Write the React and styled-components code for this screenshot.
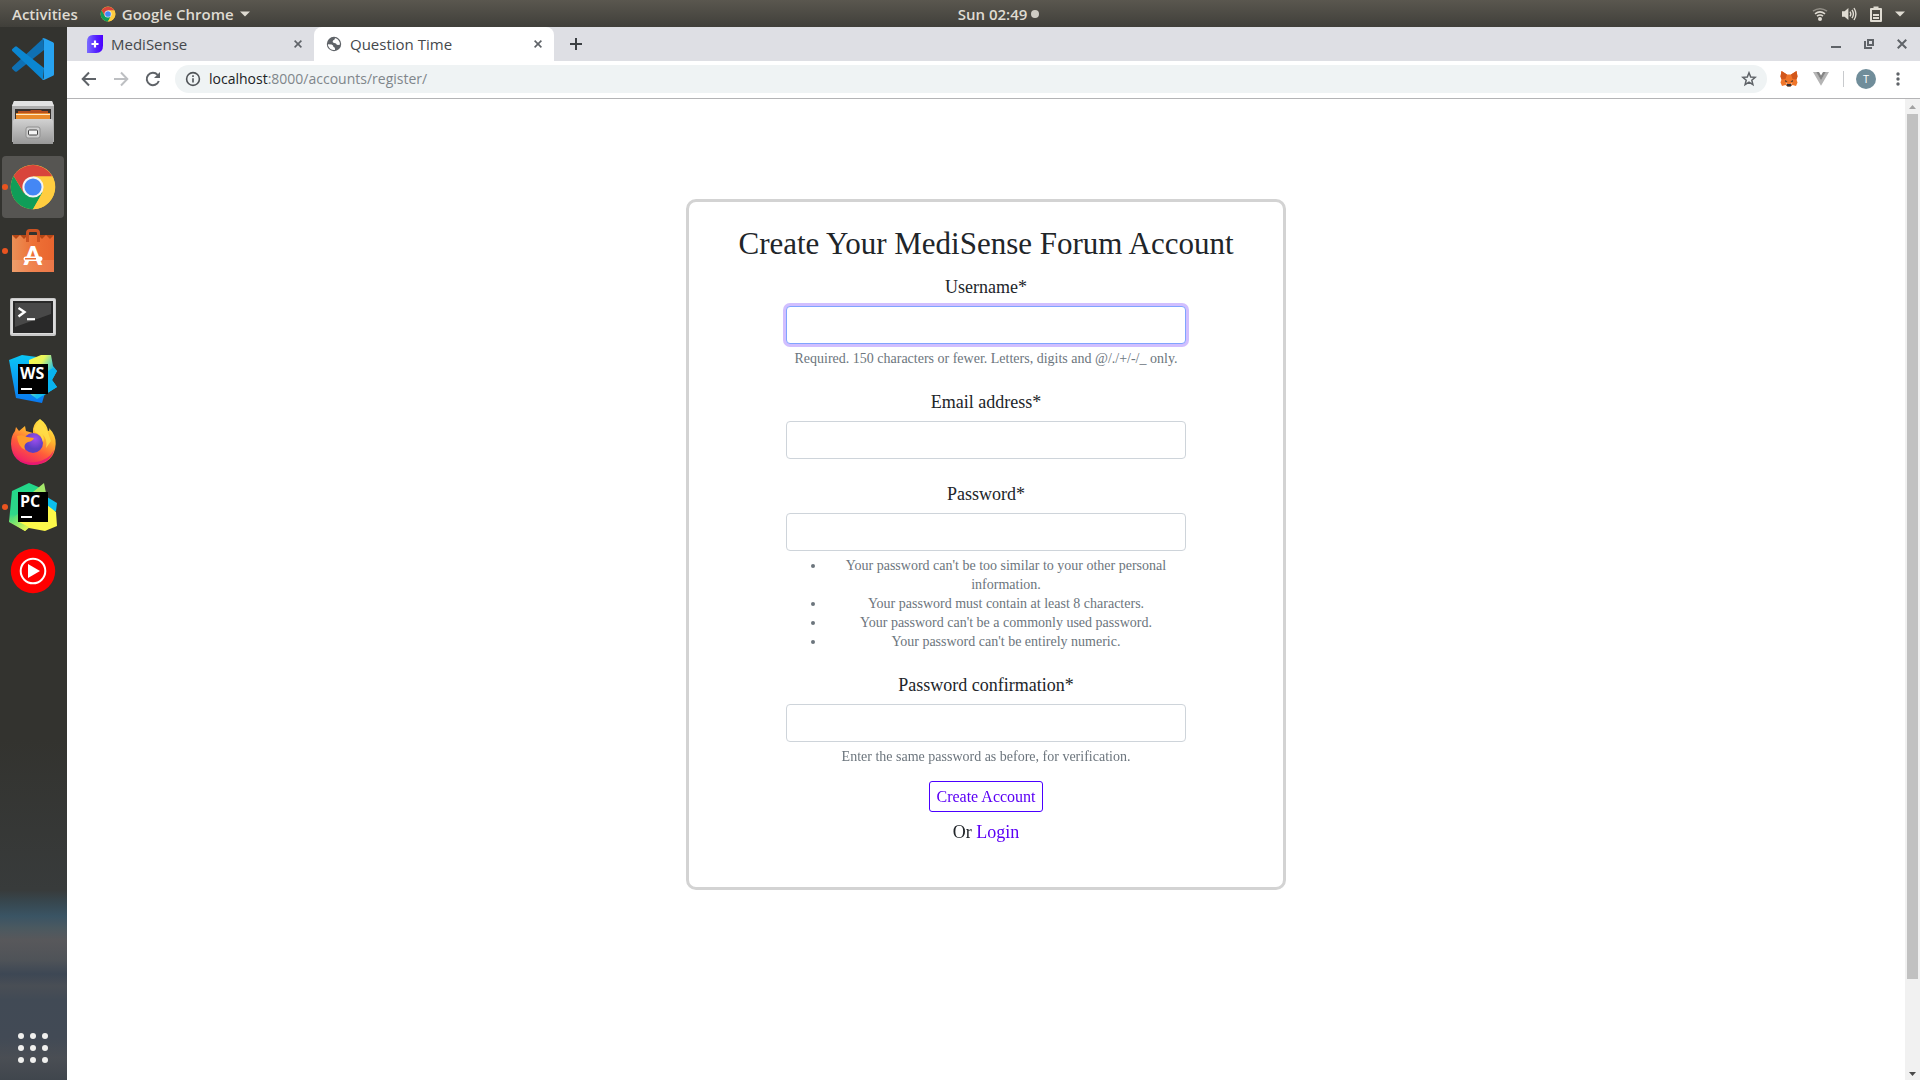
import React from "react";
import styled, { createGlobalStyle, css } from "styled-components";

const UI_FONT = '"Open Sans", "Noto Sans", sans-serif';
const PAGE_FONT = '"Liberation Serif", serif';

const GlobalStyle = createGlobalStyle`
  *, *::before, *::after { box-sizing: border-box; }
  body { margin: 0; background: #fff; font-family: ${UI_FONT}; }
  button { font-family: inherit; cursor: pointer; }
  svg { display: block; flex: none; }
`;

/* ---------- desktop ---------- */

const Desktop = styled.div`
  display: flex;
  flex-direction: column;
  min-height: 100vh;
`;

const TopBar = styled.header`
  display: grid;
  grid-template-columns: 1fr auto 1fr;
  align-items: center;
  height: 27px;
  padding: 0 15px 0 12px;
  background: linear-gradient(#5a574f, #403f3a);
  color: #dfdbd2;
  font-size: 15px;
  font-weight: 600;
  line-height: 20px;
`;

const BarGroup = styled.div`
  display: flex;
  align-items: center;
  gap: ${(p) => p.$gap}px;
  justify-content: ${(p) => (p.$end ? "flex-end" : "flex-start")};
`;

const BarButton = styled.button`
  display: flex;
  align-items: center;
  gap: 6px;
  padding: 0;
  border: 0;
  background: none;
  color: inherit;
  font-size: inherit;
  font-weight: inherit;
  line-height: inherit;
`;

const Clock = styled(BarButton)`
  gap: 4px;
  padding-left: 80px;
`;

const Dot = styled.span`
  width: 8px;
  height: 8px;
  border-radius: 50%;
  background: #cfccc4;
`;

const Workspace = styled.div`
  display: flex;
  flex: 1;
`;

const Dock = styled.nav`
  display: flex;
  flex-direction: column;
  gap: 2px;
  width: 67px;
  padding: 1px 3px 1px 2px;
  background: linear-gradient(to bottom, #33332f 0, #33332f calc(100% - 340px), #383b3b calc(100% - 190px),
      #37474f calc(100% - 178px), #3a5464 calc(100% - 164px), #4b5960 calc(100% - 152px),
      #58585b calc(100% - 140px), #4f5358 calc(100% - 120px), #3d4754 calc(100% - 106px),
      #494e55 calc(100% - 94px), #414a55 calc(100% - 80px), #424a55 calc(100% - 42px),
      #4a4e54 calc(100% - 22px), #40464d 100%);
`;

const DockButton = styled.button`
  position: relative;
  display: flex;
  align-items: center;
  justify-content: center;
  width: 62px;
  height: 62px;
  padding: 0;
  border: 0;
  border-radius: 4px;
  background: ${(p) => (p.$active ? "#565552" : "none")};

  ${(p) =>
    p.$running &&
    css`
      &::before {
        content: "";
        position: absolute;
        left: 0;
        width: 6px;
        height: 6px;
        border-radius: 50%;
        background: #e95420;
      }
    `}
`;

const AppsButton = styled(DockButton)`
  margin-top: auto;
`;

/* ---------- browser ---------- */

const Browser = styled.section`
  display: flex;
  flex: 1;
  flex-direction: column;
  min-width: 0;
  background: #fff;
`;

const TabStrip = styled.div`
  display: flex;
  align-items: center;
  height: 34px;
  background: #dedfe4;
`;

const Tab = styled.div`
  display: flex;
  align-items: center;
  gap: 8px;
  height: 34px;
  padding: 0 8px 0 ${(p) => (p.$active ? 12 : 20)}px;
  width: ${(p) => (p.$active ? 240 : 247)}px;
  border-radius: 8px 8px 0 0;
  background: ${(p) => (p.$active ? "#fff" : "none")};
  color: #45484c;
  font-size: 15px;
  line-height: 20px;
`;

const TabTitle = styled.span`
  flex: 1;
  white-space: nowrap;
`;

const IconButton = styled.button`
  display: flex;
  align-items: center;
  justify-content: center;
  width: ${(p) => p.$size || 16}px;
  height: ${(p) => p.$size || 16}px;
  padding: 0;
  border: 0;
  background: none;
  color: #5f6368;
`;

const NewTab = styled(IconButton)`
  margin-left: 12px;
`;

const WindowControls = styled.div`
  display: flex;
  gap: 17px;
  margin-left: auto;
  padding-right: 10px;
`;

const Toolbar = styled.div`
  display: flex;
  align-items: center;
  height: 38px;
  padding: 0 12px 1px;
  border-bottom: 1px solid #b4b4b6;
`;

const NavButtons = styled.div`
  display: flex;
  gap: 12px;
  margin-right: 12px;
`;

const Omnibox = styled.div`
  display: flex;
  flex: 1;
  align-items: center;
  gap: 8px;
  height: 28px;
  padding: 0 10px;
  border-radius: 14px;
  background: #eff3f4;
`;

const Address = styled.span`
  flex: 1;
  color: #80868b;
  font-size: 14px;
  line-height: 20px;

  b {
    color: #202124;
    font-weight: 400;
  }
`;

const Extensions = styled.div`
  display: flex;
  align-items: center;
  gap: 12px;
  margin-left: 12px;
`;

const Divider = styled.span`
  width: 1px;
  height: 16px;
  background: #c8cacd;
`;

const Avatar = styled.button`
  width: 20px;
  height: 20px;
  padding: 0;
  border: 0;
  border-radius: 50%;
  background: #708d9a;
  color: #fff;
  font-size: 11px;
  line-height: 20px;
`;

const Viewport = styled.div`
  display: flex;
  flex: 1;
`;

const Scrollbar = styled.div`
  display: flex;
  flex-direction: column;
  align-items: center;
  gap: 2px;
  width: 15px;
  background: #f1f1f1;
`;

const ScrollTrack = styled.div`
  flex: 1;
  width: 11px;
`;

const ScrollThumb = styled.div`
  height: 91%;
  background: #c1c1c1;
`;

/* ---------- page ---------- */

const Page = styled.main`
  flex: 1;
  padding: 100px 20px;
  color: #212529;
  font-family: ${PAGE_FONT};
`;

const Card = styled.form`
  display: flex;
  flex-direction: column;
  align-items: center;
  max-width: 600px;
  margin: 0 auto;
  padding: 24px 27px 42px;
  border: 3px solid #d3d3d3;
  border-radius: 10px;
  text-align: center;
`;

const Title = styled.h1`
  margin: 0 0 12px;
  font-size: 31px;
  font-weight: 400;
  line-height: 36px;
`;

const Field = styled.div`
  display: flex;
  flex-direction: column;
  width: 400px;
  max-width: 100%;
  margin-bottom: ${(p) => (p.$last ? 16 : 22)}px;
`;

const Label = styled.label`
  margin-bottom: 6px;
  font-size: 18px;
  line-height: 26px;
`;

const Input = styled.input`
  width: 100%;
  height: 38px;
  padding: 6px 12px;
  border: 1px solid #ced4da;
  border-radius: 4px;
  background: #fff;
  color: #495057;
  font-family: inherit;
  font-size: 18px;

  &:focus {
    border-color: #80a4ff;
    outline: 0;
    box-shadow: 0 0 0 3px #d1bfff;
  }
`;

const helpText = css`
  margin: 5px 0 -1px;
  color: #6c757d;
  font-size: 14px;
  line-height: 19px;
`;

const Help = styled.small`
  ${helpText}
`;

const Rules = styled.ul`
  ${helpText}
  padding-left: 40px;
`;

const Submit = styled.button`
  height: 31px;
  padding: 0 6px;
  border: 1px solid #4b00ff;
  border-radius: 3px;
  background: #fff;
  color: #5b00f5;
  font-size: 16px;
  line-height: 21px;
`;

const Alternative = styled.p`
  margin: 7px 0 0;
  font-size: 18px;
  line-height: 26px;
`;

const Link = styled.a`
  color: #5b00f5;
  text-decoration: none;
`;

/* ---------- icons ---------- */

const Caret = () => (
  <svg width="10" height="6" viewBox="0 0 10 6"><path d="M0 .5h10L5 5.5z" fill="#dfdbd2" /></svg>
);

const ChromeIcon = ({ size }) => (
  <svg width={size} height={size} viewBox="0 0 48 48">
    <circle cx="24" cy="24" r="22.3" fill="#fbc93a" />
    <path d="M24 24 33.5 29.5 24 46.3A22.3 22.3 0 0 1 4.7 12.9L14.5 29.5z" fill="#109d58" />
    <path d="M4.7 12.9A22.3 22.3 0 0 1 43.3 13.5H24L14.8 30z" fill="#d8453b" />
    <path d="M24 13.5H43.4A22.3 22.3 0 0 1 24 46.3L33.5 29.5z" fill="#ffcd40" />
    <circle cx="24" cy="24" r="10.6" fill="#f4f4f4" />
    <circle cx="24" cy="24" r="8.6" fill="#4487f5" />
  </svg>
);

const Wifi = () => (
  <svg width="16" height="16" viewBox="0 0 16 16" fill="none" stroke="#dfdbd2" strokeWidth="1.6">
    <path d="M1 5.2Q8 .2 15 5.2" opacity=".45" />
    <path d="M3 7.8Q8 4 13 7.8" />
    <path d="M5 10.2Q8 7.8 11 10.2" />
    <circle cx="8" cy="13" r="2" fill="#dfdbd2" stroke="none" />
  </svg>
);

const Volume = () => (
  <svg width="16" height="16" viewBox="0 0 16 16" fill="none" stroke="#dfdbd2" strokeWidth="1.4">
    <path d="M1 5.2h2.6L7.4 2v12L3.6 10.8H1z" fill="#dfdbd2" stroke="none" />
    <path d="M9 5.6Q10.6 8 9 10.4M11 3.8Q13.8 8 11 12.2M13 2Q16.8 8 13 14" />
  </svg>
);

const Battery = () => (
  <svg width="12" height="16" viewBox="0 0 12 16">
    <path d="M3.5.5h5V2H11q1 0 1 1v12q0 1-1 1H1q-1 0-1-1V3q0-1 1-1h2.500zM2 4v10h8V4z" fill="#dfdbd2" fillRule="evenodd" />
    <path d="M3 8h6v2H3zM3 11h6v2H3z" fill="#dfdbd2" />
  </svg>
);

const Cross = ({ s = 8, w = 1.6 }) => (
  <svg width={s} height={s} viewBox="0 0 8 8"><path d="M.6.6 7.400 7.400M7.400.6.6 7.400" stroke="currentColor" strokeWidth={w} /></svg>
);

const MediSenseIcon = () => (
  <svg width="16" height="18" viewBox="0 0 16 18">
    <defs>
      <linearGradient id="medi"><stop offset="0" stopColor="#7a6cff" /><stop offset=".6" stopColor="#5420ff" /><stop offset="1" stopColor="#4b00ff" /></linearGradient>
    </defs>
    <path d="M6 0h10v10.500Q16 18 9 18H0V7Q0 0 6 0z" fill="url(#medi)" />
    <path d="M8 5.500v7M4.500 9h7" stroke="#fff" strokeWidth="2.200" />
  </svg>
);

const GlobeIcon = () => (
  <svg width="16" height="16" viewBox="0 0 16 16">
    <circle cx="8" cy="8" r="7.200" fill="#5f6368" />
    <path d="M9 2.200Q8.700 4 7 4.400 6 6 7.500 6.800L10 7.400Q10.500 9 12.300 9L14 8.400Q13.800 4 9.800 2.300z" fill="#fff" />
    <path d="M2 8.200 5.600 8.400Q7.500 9 7.500 11 9.200 11 9 14 4 14.600 2 9.500z" fill="#fff" />
  </svg>
);

const Arrow = ({ flip, color }) => (
  <svg width="16" height="16" viewBox="0 0 16 16" fill="none" stroke={color} strokeWidth="2">
    <path d={flip ? "M1 8h13M8 1.500 14.300 8 8 14.500" : "M15 8H2M8 1.500 1.700 8 8 14.500"} />
  </svg>
);

const Reload = () => (
  <svg width="16" height="16" viewBox="0 0 16 16" fill="none" stroke="#5f6368" strokeWidth="2">
    <path d="M13.800 10A6.200 6.200 0 1 1 12.600 3.800" />
    <path d="M15 1v6H9z" fill="#5f6368" stroke="none" />
  </svg>
);

const Info = () => (
  <svg width="16" height="16" viewBox="0 0 16 16" fill="none" stroke="#4f5357" strokeWidth="1.600">
    <circle cx="8" cy="8" r="6.400" />
    <path d="M8 7.200V11.600M8 4.300V5.900" />
  </svg>
);

const Star = () => (
  <svg width="16" height="16" viewBox="0 0 16 16" fill="none" stroke="#5f6368" strokeWidth="1.500">
    <path d="M8 1.800 9.700 6 14.200 6.300 10.800 9.200 11.900 13.600 8 11.200 4.100 13.600 5.200 9.200 1.800 6.300 6.300 6z" />
  </svg>
);

const Fox = () => (
  <svg width="18" height="16" viewBox="0 0 18 16">
    <path d="M1.500 0 7 3.500h4L16.500 0l1 5.500-1 3 1 3L16 15l-3.500-1L10.500 15.500h-3L5.500 14 2 15 .5 11.500l1-3-1-3z" fill="#f0762a" />
    <path d="M1.500 0 7 3.500 5.500 8 1.500 8.500.5 5.500zM16.500 0 11 3.500 12.500 8l4 .5 1-3z" fill="#d2571b" />
    <path d="M7 13h4l.5 1.500-1 1h-3l-1-1z" fill="#30343c" />
    <path d="M5 9l2.500 1.500L5.500 11zM13 9l-2.500 1.500 2 .5z" fill="#39322e" />
    <path d="M5.500 12.500 7 12v1.500zM12.500 12.500 11 12v1.500z" fill="#dccbbd" />
  </svg>
);

const Vue = () => (
  <svg width="16" height="14" viewBox="0 0 16 14">
    <path d="M0 0h3.500L8 7.800 12.500 0H16L8 13.800z" fill="#b4b4b4" />
    <path d="M3.200 0H6l2 3.500L10 0h2.800L8 8.300z" fill="#858585" />
  </svg>
);

const More = () => (
  <svg width="4" height="14" viewBox="0 0 4 14" fill="#5f6368">
    <circle cx="2" cy="2" r="1.700" /><circle cx="2" cy="7" r="1.700" /><circle cx="2" cy="12" r="1.700" />
  </svg>
);

const ScrollArrow = ({ down }) => (
  <svg width="15" height="13" viewBox="0 0 15 13">
    <path d={down ? "M4 5h7L7.500 9z" : "M4 10h7L7.500 6z"} fill={down ? "#4a4a4a" : "#a3a3a3"} />
  </svg>
);

const DockIcon = ({ children }) => (
  <svg width="48" height="48" viewBox="0 0 48 48">{children}</svg>
);

const VSCode = () => (
  <DockIcon>
    <path d="M34.700 3 35 15 8 36.500Q7 37.200 6 36.400L3.300 34Q2.300 33 3.300 32z" fill="#0f70b3" />
    <path d="M3.300 16Q2.300 15 3.300 14L6 11.700Q7 11 8 11.700L35 33 34 45z" fill="#0b86d1" />
    <path d="M34 3.300Q35 3 36 3.400L44 7.200Q45 7.700 45 8.700V39.300Q45 40.300 44 40.800L36 44.600Q34.500 45.300 33.300 44.300 35 44.300 35 42V6Q35 4 33.300 3.700z" fill="#27a3f1" />
  </DockIcon>
);

const Files = () => (
  <DockIcon>
    <defs>
      <linearGradient id="cab" x2="0" y2="1"><stop offset="0" stopColor="#d2d2d2" /><stop offset="1" stopColor="#989898" /></linearGradient>
    </defs>
    <path d="M3 7 5 2h38l2 5v36H3z" fill="#aeaeae" />
    <path d="M5 2h38l2 5H3z" fill="#e2e2e2" />
    <path d="M6 10h36v12H6z" fill="#35302d" />
    <path d="M9 12h12l1-1h10l1 1h6v2H9z" fill="#b7501e" />
    <path d="M7 14h34v8H7z" fill="#e98b2c" />
    <path d="M7 15h34v1H7z" fill="#ffe9c4" />
    <path d="M5 20h38l1 2v23H4V22z" fill="url(#cab)" />
    <rect x="17" y="28" width="14" height="11" rx="2" fill="#d0d0d0" stroke="#8f8f8f" />
    <rect x="19.500" y="31" width="9" height="5" rx="1" fill="#f5f5f5" stroke="#444" />
  </DockIcon>
);

const Software = () => (
  <DockIcon>
    <defs>
      <linearGradient id="bag"><stop offset="0" stopColor="#ea9057" /><stop offset=".5" stopColor="#ee7136" /><stop offset="1" stopColor="#e9652f" /></linearGradient>
    </defs>
    <path d="M3 8h42v5H3z" fill="#b54716" />
    <path d="M3 8 7 12 11 8 15 12 19 8h10l4 4 4-4 4 4 4-4v37H3z" fill="url(#bag)" />
    <path d="M3 33h42v12H3z" fill="#fff" opacity=".12" />
    <path d="M18.500 15V6Q18.500 3.500 21 3.500h6Q29.500 3.500 29.500 6v9" fill="none" stroke="#cb5222" strokeWidth="3" />
    <text x="24" y="38" textAnchor="middle" fontFamily="Lato, sans-serif" fontWeight="900" fontSize="26" fill="#fff">A</text>
    <rect x="14.500" y="29.500" width="19" height="4.500" rx="2.200" fill="#fff" />
    <rect x="16" y="31" width="11" height="1.500" fill="#ee7136" />
  </DockIcon>
);

const Terminal = () => (
  <DockIcon>
    <rect x="1" y="7" width="46" height="38" rx="2" fill="#c9c9c9" />
    <rect x="2" y="8" width="44" height="35" rx="1" fill="#dcdcdc" />
    <rect x="4" y="10" width="40" height="32" fill="#292929" />
    <path d="M6 12h36v11L6 36z" fill="#484848" />
    <path d="m9.500 17 6 4-6 4.500" fill="none" stroke="#fff" strokeWidth="2.400" />
    <path d="M18 28.200h8" stroke="#fff" strokeWidth="2.200" />
  </DockIcon>
);

const JetBrainsTile = ({ name }) => (
  <>
    <path d="M9 9h30v30H9z" fill="#000" />
    <text x="11" y="24" fontFamily="Open Sans, sans-serif" fontWeight="700" fontSize="16" fill="#fff">{name}</text>
    <path d="M12 34h11" stroke="#fff" strokeWidth="2" />
  </>
);

const WebStorm = () => (
  <DockIcon>
    <defs>
      <linearGradient id="wsa" x2="0" y2="1"><stop offset="0" stopColor="#0ac6f5" /><stop offset="1" stopColor="#0a78f0" /></linearGradient>
      <linearGradient id="wsb" x2="1" y2="1"><stop offset="0" stopColor="#fcf84a" /><stop offset=".3" stopColor="#e8f55c" /><stop offset=".6" stopColor="#18bdee" /></linearGradient>
    </defs>
    <path d="M0 5 13 0 28 2 36 38 33 48 7 43z" fill="url(#wsa)" />
    <path d="M20 5 32 0H42L44 11 48 16 43 25 48 32 28 44 20 38z" fill="url(#wsb)" />
    <path d="M39 16 44 13 48 16 43 25 48 32 34 41z" fill="#08b4f0" />
    <JetBrainsTile name="WS" />
  </DockIcon>
);

const PyCharm = () => (
  <DockIcon>
    <defs>
      <linearGradient id="pca" x2="0" y2="1"><stop offset="0" stopColor="#21d789" /><stop offset=".65" stopColor="#2fd78a" /><stop offset="1" stopColor="#d8f04f" /></linearGradient>
      <linearGradient id="pcb" x2="1" y2="1"><stop offset="0" stopColor="#21d789" /><stop offset="1" stopColor="#fcf84a" /></linearGradient>
    </defs>
    <path d="M38 14 48 20 47 28 38 34z" fill="#0bc0ee" />
    <path d="M3 8 20 0 34 6 26 40 16 48 0 39z" fill="url(#pca)" />
    <path d="M24 9 35 0 37 10z" fill="#a5e86a" />
    <path d="M38 22 47 29 48 43 36 48 20 45 9 39 30 34z" fill="#fcf84a" />
    <path d="M0 38 10 30V39L20 44 16 48z" fill="url(#pcb)" />
    <JetBrainsTile name="PC" />
  </DockIcon>
);

const Firefox = () => (
  <DockIcon>
    <defs>
      <linearGradient id="ffa" x1=".8" y1="0" x2=".3" y2="1"><stop offset="0" stopColor="#fff14a" /><stop offset=".35" stopColor="#ffb52e" /><stop offset=".65" stopColor="#ff5b3b" /><stop offset="1" stopColor="#ee1a6c" /></linearGradient>
      <radialGradient id="ffb" cx=".6" cy=".3"><stop offset="0" stopColor="#a04ff0" /><stop offset="1" stopColor="#5b3fc4" /></radialGradient>
    </defs>
    <path d="M31 0Q38 5 39 12 41 12 40 9 47 16 46.700 25 45.500 45 24 46 3 45 2 25 2 17 6 12L7 8 10 12 16 7 17 12 24 14Q23 5 31 0z" fill="url(#ffa)" />
    <path d="M4 32Q10 46 27 43 40 41 45 31 41 45 24 46 9 45.500 4 32z" fill="#e5127a" opacity=".75" />
    <circle cx="24" cy="24" r="10" fill="url(#ffb)" />
    <path d="M8 17Q13 15 18 18L25 19Q24 22 19 23 14 25 16 31 9 28 8 17z" fill="#ff9b2b" />
    <path d="M26 13Q32 15 34 23 36 19 33 15 39 20 37 29L42 22 38 11 30 3 25 9z" fill="#ffe04a" opacity=".8" />
  </DockIcon>
);

const YTMusic = () => (
  <DockIcon>
    <circle cx="24" cy="24" r="22.200" fill="#f00" />
    <circle cx="24" cy="24" r="12.300" fill="none" stroke="#fff" strokeWidth="2" />
    <path d="M19 17v14l12-7z" fill="#fff" />
  </DockIcon>
);

const AppGrid = () => (
  <DockIcon>
    {[12, 24, 36].map((y) => [12, 24, 36].map((x) => <circle key={`${x}-${y}`} cx={x} cy={y} r="3" fill="#f0f0ee" />))}
  </DockIcon>
);

/* ---------- data ---------- */

const dockApps = [
  { name: "Visual Studio Code", Icon: VSCode },
  { name: "Files", Icon: Files },
  { name: "Google Chrome", Icon: () => <ChromeIcon size={48} />, active: true, running: true },
  { name: "Ubuntu Software", Icon: Software, running: true },
  { name: "Terminal", Icon: Terminal },
  { name: "WebStorm", Icon: WebStorm },
  { name: "Firefox", Icon: Firefox },
  { name: "PyCharm", Icon: PyCharm, running: true },
  { name: "YouTube Music", Icon: YTMusic },
];

const fields = [
  { id: "username", label: "Username*", type: "text", autoFocus: true, help: "Required. 150 characters or fewer. Letters, digits and @/./+/-/_ only." },
  { id: "email", label: "Email address*", type: "email" },
  {
    id: "password1",
    label: "Password*",
    type: "password",
    rules: [
      "Your password can't be too similar to your other personal information.",
      "Your password must contain at least 8 characters.",
      "Your password can't be a commonly used password.",
      "Your password can't be entirely numeric.",
    ],
  },
  { id: "password2", label: "Password confirmation*", type: "password", help: "Enter the same password as before, for verification." },
];

function RegisterForm() {
  return (
    <Card onSubmit={(e) => e.preventDefault()}>
      <Title>Create Your MediSense Forum Account</Title>
      {fields.map((f, i) => (
        <Field key={f.id} $last={i === fields.length - 1}>
          <Label htmlFor={f.id}>{f.label}</Label>
          <Input id={f.id} type={f.type} autoFocus={f.autoFocus} />
          {f.help && <Help>{f.help}</Help>}
          {f.rules && <Rules>{f.rules.map((r) => <li key={r}>{r}</li>)}</Rules>}
        </Field>
      ))}
      <Submit type="submit">Create Account</Submit>
      <Alternative>Or <Link href="#login">Login</Link></Alternative>
    </Card>
  );
}

export default function App() {
  return (
    <Desktop>
      <GlobalStyle />
      <TopBar>
        <BarGroup $gap={22}>
          <BarButton>Activities</BarButton>
          <BarButton><ChromeIcon size={16} />Google Chrome<Caret /></BarButton>
        </BarGroup>
        <Clock>Sun 02:49<Dot /></Clock>
        <BarGroup $gap={13} $end>
          <Wifi /><Volume /><Battery /><Caret />
        </BarGroup>
      </TopBar>
      <Workspace>
        <Dock>
          {dockApps.map(({ name, Icon, active, running }) => (
            <DockButton key={name} aria-label={name} $active={active} $running={running}><Icon /></DockButton>
          ))}
          <AppsButton aria-label="Show Applications"><AppGrid /></AppsButton>
        </Dock>
        <Browser>
          <TabStrip>
            <Tab>
              <MediSenseIcon />
              <TabTitle>MediSense</TabTitle>
              <IconButton aria-label="Close tab"><Cross /></IconButton>
            </Tab>
            <Tab $active>
              <GlobeIcon />
              <TabTitle>Question Time</TabTitle>
              <IconButton aria-label="Close tab"><Cross /></IconButton>
            </Tab>
            <NewTab $size={20} aria-label="New tab">
              <svg width="12" height="12" viewBox="0 0 12 12"><path d="M6 0v12M0 6h12" stroke="#3c4043" strokeWidth="2" /></svg>
            </NewTab>
            <WindowControls>
              <IconButton aria-label="Minimize">
                <svg width="10" height="10" viewBox="0 0 10 10"><path d="M0 8h10" stroke="currentColor" strokeWidth="2" /></svg>
              </IconButton>
              <IconButton aria-label="Restore">
                <svg width="10" height="10" viewBox="0 0 10 10" fill="none" stroke="currentColor" strokeWidth="2"><path d="M4 1h5v5H4zM1 2v7h7" /></svg>
              </IconButton>
              <IconButton aria-label="Close window"><Cross s={10} /></IconButton>
            </WindowControls>
          </TabStrip>
          <Toolbar>
            <NavButtons>
              <IconButton $size={20} aria-label="Back"><Arrow color="#5f6368" /></IconButton>
              <IconButton $size={20} aria-label="Forward"><Arrow flip color="#bdbfc2" /></IconButton>
              <IconButton $size={20} aria-label="Reload"><Reload /></IconButton>
            </NavButtons>
            <Omnibox>
              <Info />
              <Address><b>localhost</b>:8000/accounts/register/</Address>
              <IconButton aria-label="Bookmark this page"><Star /></IconButton>
            </Omnibox>
            <Extensions>
              <IconButton $size={20} aria-label="MetaMask"><Fox /></IconButton>
              <IconButton $size={20} aria-label="Vue devtools"><Vue /></IconButton>
              <Divider />
              <Avatar aria-label="Profile">T</Avatar>
              <IconButton $size={20} aria-label="Menu"><More /></IconButton>
            </Extensions>
          </Toolbar>
          <Viewport>
            <Page><RegisterForm /></Page>
            <Scrollbar>
              <ScrollArrow />
              <ScrollTrack><ScrollThumb /></ScrollTrack>
              <ScrollArrow down />
            </Scrollbar>
          </Viewport>
        </Browser>
      </Workspace>
    </Desktop>
  );
}
